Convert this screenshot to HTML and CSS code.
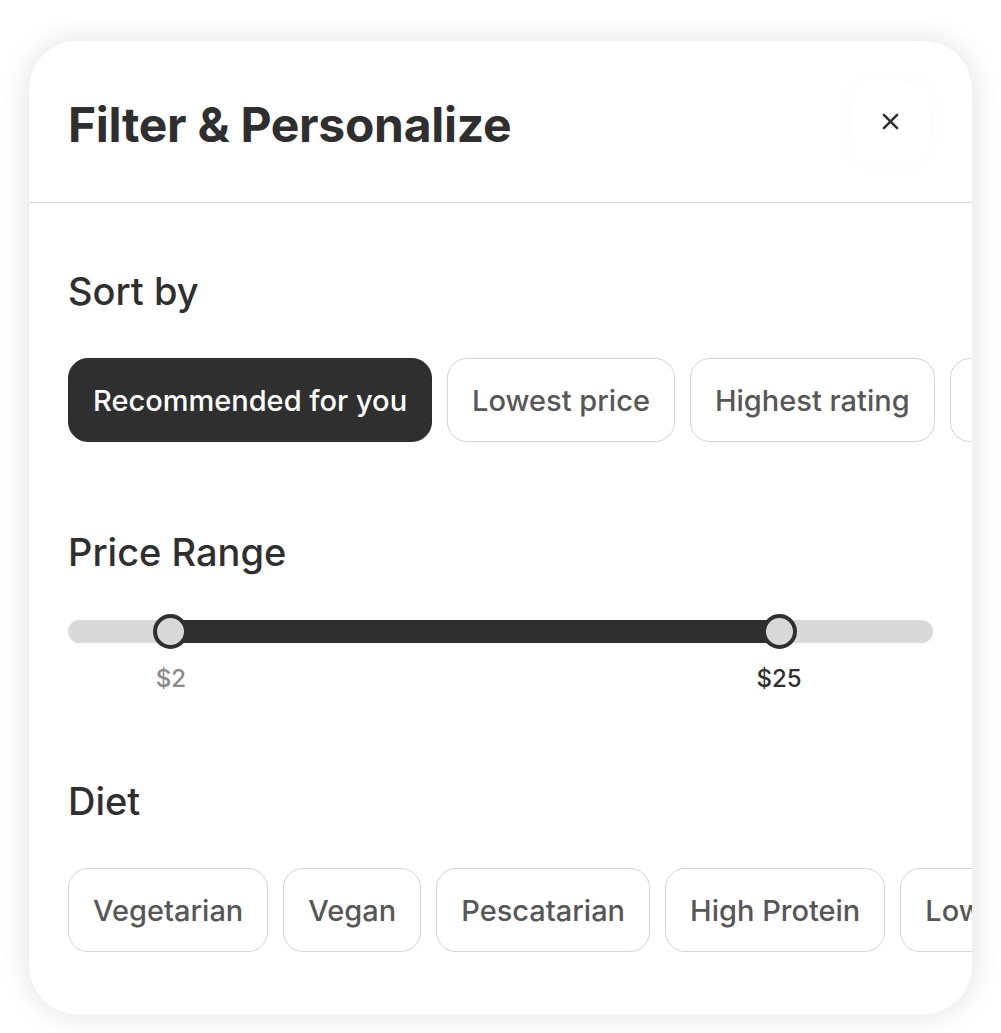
FILE: index.html
```html
<!DOCTYPE html>
<html lang="en">
<head>
<meta charset="utf-8">
<title>Filter & Personalize</title>
<link rel="stylesheet" href="styles.css">
</head>
<body>
<div class="card">
  <header class="card-header">
    <h1 class="title">Filter &amp; Personalize</h1>
    <button class="close" aria-label="Close">
      <svg width="20" height="20" viewBox="0 0 20 20"><path d="M3 3 L17 17 M17 3 L3 17" stroke="#2f2f2f" stroke-width="2.6" stroke-linecap="round"/></svg>
    </button>
  </header>
  <div class="card-body">
    <section class="section">
      <h2 class="section-title">Sort by</h2>
      <div class="chips">
        <span class="chip chip-active">Recommended for you</span>
        <span class="chip">Lowest price</span>
        <span class="chip">Highest rating</span>
        <span class="chip">Fastest delivery</span>
      </div>
    </section>
    <section class="section">
      <h2 class="section-title">Price Range</h2>
      <div class="slider">
        <div class="track">
          <div class="fill" style="left:11.9%;width:70.3%"></div>
          <div class="thumb" style="left:11.9%"></div>
          <div class="thumb" style="left:82.2%"></div>
        </div>
        <div class="labels">
          <span class="label label-min" style="left:11.9%">$2</span>
          <span class="label label-max" style="left:82.2%">$25</span>
        </div>
      </div>
    </section>
    <section class="section">
      <h2 class="section-title">Diet</h2>
      <div class="chips">
        <span class="chip">Vegetarian</span>
        <span class="chip">Vegan</span>
        <span class="chip">Pescatarian</span>
        <span class="chip">High Protein</span>
        <span class="chip">Low Carb</span>
      </div>
    </section>
  </div>
</div>
</body>
</html>
```

FILE: styles.css
```css
* { box-sizing: border-box; }
html, body { margin: 0; padding: 0; background: #ffffff; }
body {
  font-family: "Inter", "Noto Sans", sans-serif;
  color: #2f2f2f;
  padding: 41px 29px 19px 29px;
}
.card {
  width: 943px;
  height: 973px;
  background: #fff;
  border-radius: 48px;
  box-shadow: 0 0 30px rgba(0,0,0,0.12);
  overflow: hidden;
}
.card-header {
  height: 162px;
  display: flex;
  align-items: center;
  justify-content: space-between;
  padding: 0 39px;
  border-bottom: 1px solid #d6d6d6;
}
.title {
  margin: 0;
  font-size: 48px;
  font-weight: 700;
  letter-spacing: -0.3px;
  color: #2f2f2f;
  padding-top: 6px;
}
.close {
  width: 80px;
  height: 80px;
  margin-right: 3px;
  border: none;
  background: #fff;
  border-radius: 20px;
  box-shadow: 0 0 30px rgba(0,0,0,0.02);
  display: flex;
  align-items: center;
  justify-content: center;
  padding: 0;
}
.close svg { width: 19px; height: 19px; }
.card-body {
  padding: 65px 0 0 39px;
}
.section { margin-bottom: 87px; }
.section-title {
  margin: 0 0 44px 0;
  font-size: 38px;
  font-weight: 500;
  color: #2f2f2f;
  line-height: 46px;
}
.chips {
  display: flex;
  gap: 15px;
  white-space: nowrap;
}
.chip {
  flex: none;
  height: 84px;
  display: flex;
  align-items: center;
  padding: 0 24px;
  border: 1px solid #d4d4d4;
  border-radius: 20px;
  font-size: 29px;
  font-weight: 500;
  color: #575757;
  background: #fff;
}
.chip-active {
  background: #2f2f2f;
  border-color: #2f2f2f;
  color: #fff;
}
.slider {
  width: 865px;
  padding-top: 1px;
}
.track {
  position: relative;
  height: 23px;
  border-radius: 12px;
  background: #d9d9d9;
}
.fill {
  position: absolute;
  top: 0;
  bottom: 0;
  background: #2f2f2f;
}
.thumb {
  position: absolute;
  top: 50%;
  width: 35px;
  height: 35px;
  margin: -17.5px 0 0 -17.5px;
  border-radius: 50%;
  background: #d9d9d9;
  border: 4px solid #2f2f2f;
}
.labels {
  position: relative;
  height: 48px;
}
.label {
  position: absolute;
  top: 21px;
  transform: translateX(-50%);
  font-size: 24px;
  font-weight: 500;
}
.label-min { color: #8a8a8a; }
.label-max { color: #2f2f2f; }
```
